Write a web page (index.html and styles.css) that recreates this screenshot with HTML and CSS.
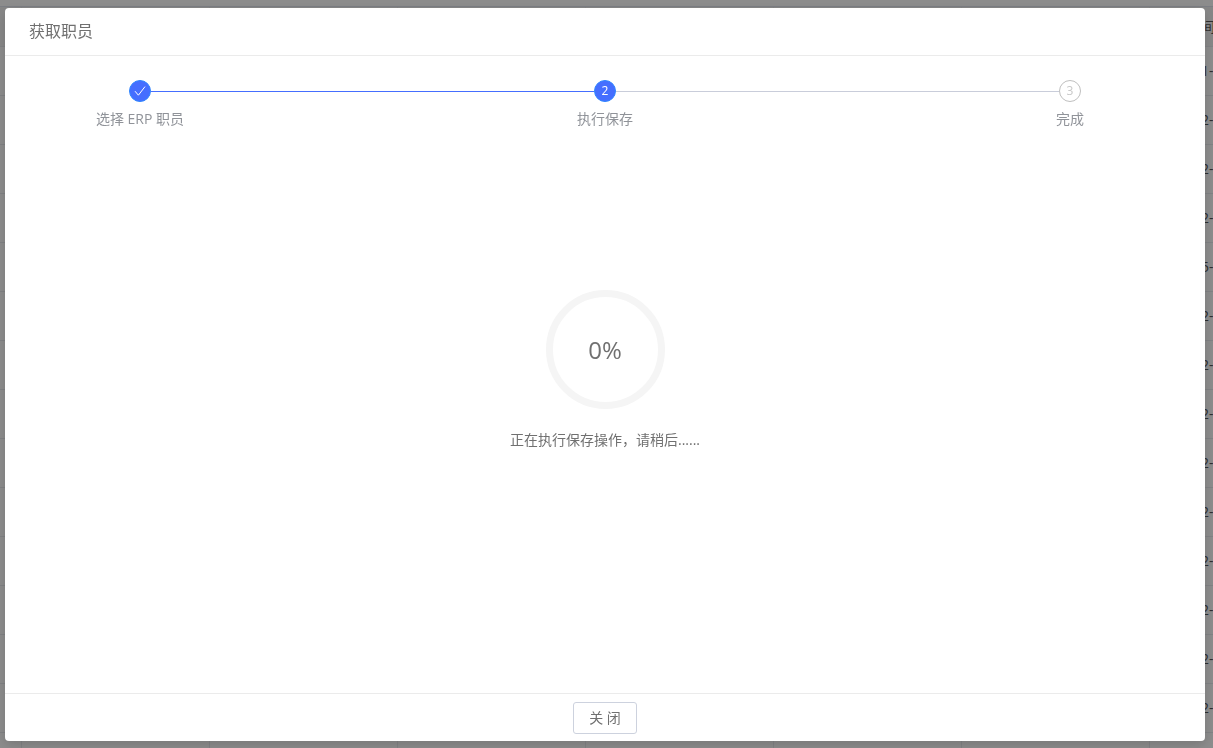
FILE: index.html
```html
<!DOCTYPE html>
<html lang="zh-CN">
<head>
    <meta charset="UTF-8">
    <meta name="viewport" content="width=device-width, initial-scale=1.0">
    <title>获取职员</title>
    <link rel="stylesheet" href="styles.css">
</head>
<body>

    <!-- Lista de fondo -->
    <div class="page" aria-hidden="true">
        <table class="list">
            <colgroup>
                <col class="col-check">
                <col class="col"><col class="col"><col class="col">
                <col class="col"><col class="col"><col class="col">
                <col class="col">
            </colgroup>
            <thead>
                <tr><th></th><th></th><th></th><th></th><th></th><th></th><th></th><th class="time">间</th></tr>
            </thead>
            <tbody id="rows"></tbody>
        </table>
    </div>

    <div class="mask">
        <section class="modal" role="dialog" aria-modal="true" aria-labelledby="modal-title">
            <header class="modal-header">
                <h1 id="modal-title" class="modal-title">获取职员</h1>
            </header>

            <div class="modal-body">
                <ol class="steps">
                    <li class="step">
                        <span class="step-icon active">
                            <svg width="12" height="12" viewBox="0 0 12 12" fill="none" stroke="currentColor" stroke-width="1">
                                <path d="M1 6.2 4.4 10.2 11 1.6"/>
                            </svg>
                        </span>
                        <span class="step-label">选择 ERP 职员</span>
                    </li>
                    <li class="step-line done" role="presentation"></li>
                    <li class="step" aria-current="step">
                        <span class="step-icon active">2</span>
                        <span class="step-label">执行保存</span>
                    </li>
                    <li class="step-line" role="presentation"></li>
                    <li class="step">
                        <span class="step-icon">3</span>
                        <span class="step-label">完成</span>
                    </li>
                </ol>

                <div class="progress">
                    <div class="circle" role="progressbar" aria-valuenow="0" aria-valuemin="0" aria-valuemax="100">0%</div>
                    <p class="progress-text">正在执行保存操作，请稍后......</p>
                </div>
            </div>

            <footer class="modal-footer">
                <button type="button" class="btn">关 闭</button>
            </footer>
        </section>
    </div>

    <script>
        const values = ["1-", "2-", "2-", "2-", "5-", "2-", "2-", "2-", "2-", "2-", "2-", "2-", "2-", "2-", ""];
        const rows = document.getElementById("rows");

        values.forEach(function(value) {
            const tr = rows.insertRow();
            for (let i = 0; i < 7; i++) {
                tr.insertCell();
            }
            const td = tr.insertCell();
            td.className = "time";
            td.textContent = value;
        });
    </script>

</body>
</html>
```
FILE: styles.css
```css
* {
    box-sizing: border-box;
}

body {
    margin: 0;
    height: 100vh;
    overflow: hidden;
    font-family: "Open Sans", "Noto Sans CJK SC", sans-serif;
    font-size: 14px;
    line-height: 22px;
    color: #707070;
    background: #fff;
}

.page {
    height: 100vh;
    padding-top: 6px;
    overflow: hidden;
}

.list {
    width: 1338px;
    table-layout: fixed;
    border-collapse: separate;
    border-spacing: 0;
    border-top: 1px solid #e2e6ee;
    color: #555;
}

.col-check {
    width: 22px;
}

.col {
    width: 188px;
}

.list th,
.list td {
    height: 49px;
    padding: 0;
    border-right: 1px solid #eceef2;
    border-bottom: 1px solid #eaecf0;
    font-weight: normal;
    text-align: left;
}

.list th {
    height: 40px;
    background: #f5f5f5;
}

.list .time {
    padding-left: 51px;
}

.mask {
    position: fixed;
    inset: 0;
    display: flex;
    padding: 8px 8px 7px 5px;
    background: rgba(0, 0, 0, 0.45);
}

.modal {
    flex: 1;
    display: flex;
    flex-direction: column;
    border-radius: 4px;
    background: #fff;
    box-shadow: 0 4px 12px rgba(0, 0, 0, 0.15);
}

.modal-header {
    padding: 12px 24px;
    border-bottom: 1px solid #ebebeb;
}

.modal-title {
    margin: 0;
    font-size: 16px;
    font-weight: normal;
    line-height: 23px;
}

.modal-body {
    flex: 1;
    padding-top: 24px;
}

.steps {
    display: flex;
    margin: 0;
    padding: 0 83px;
    list-style: none;
}

.step {
    display: flex;
    flex-direction: column;
    align-items: center;
    gap: 6px;
    width: 104px;
}

.step-icon {
    display: flex;
    justify-content: center;
    align-items: center;
    width: 22px;
    height: 22px;
    border: 1px solid #bfbfbf;
    border-radius: 50%;
    font-size: 12px;
    color: #c8c8c8;
}

.step-icon.active {
    border-color: #2f86ff;
    background: #456eff;
    color: #fff;
}

.step-label {
    color: #909399;
    white-space: nowrap;
}

/* La línea entra en los pasos vecinos hasta tocar el círculo */
.step-line {
    flex: 1;
    height: 1px;
    margin: 11px -41px 0;
    background: #c9cdda;
}

.step-line.done {
    background: #456eff;
}

.progress {
    display: flex;
    flex-direction: column;
    align-items: center;
    padding-top: 160px;
}

.circle {
    display: flex;
    justify-content: center;
    align-items: center;
    width: 119px;
    height: 119px;
    border: 7px solid #f5f5f5;
    border-radius: 50%;
    font-size: 24px;
}

.progress-text {
    margin: 20px 0 0;
}

.modal-footer {
    display: flex;
    justify-content: center;
    padding: 8px 0 7px;
    border-top: 1px solid #ebebeb;
}

.btn {
    width: 64px;
    height: 32px;
    padding: 0 0 2px;
    border: 1px solid #cdd2de;
    border-radius: 3px;
    background: #fff;
    font-family: inherit;
    font-size: 14px;
    color: #707070;
    cursor: pointer;
}

.btn:hover {
    border-color: #456eff;
    color: #456eff;
}
```
